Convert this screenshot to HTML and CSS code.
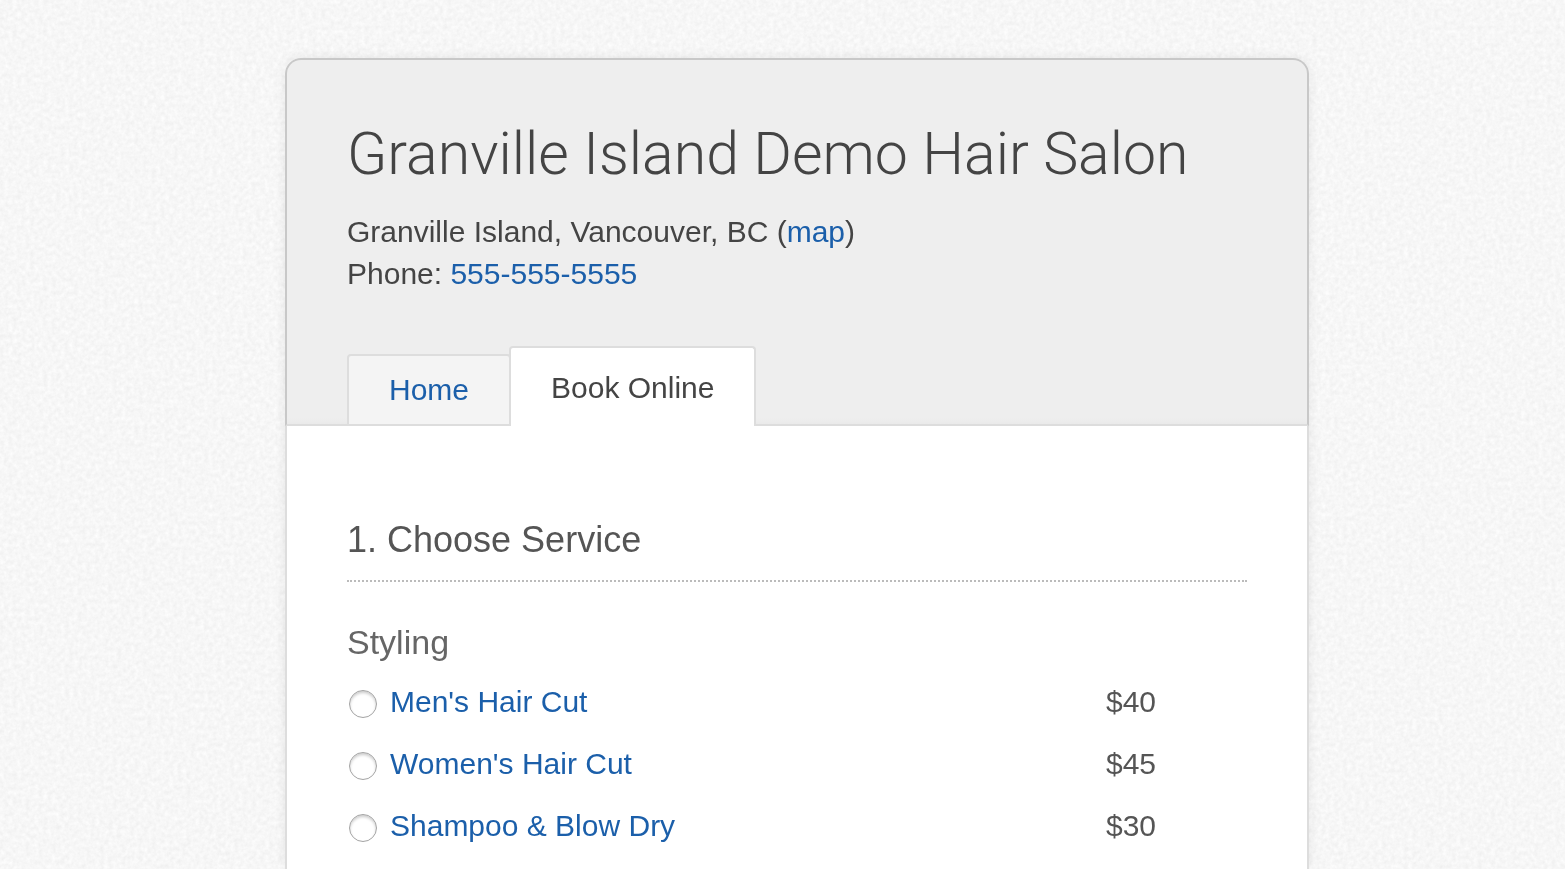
FILE: index.html
```html
<!DOCTYPE html>
<html lang="en">
<head>
<meta charset="utf-8">
<meta name="viewport" content="width=device-width, initial-scale=1">
<title>Granville Island Demo Hair Salon</title>
<link rel="stylesheet" href="styles.css">
</head>
<body class="page">
<svg class="texture" aria-hidden="true">
  <filter id="paper" x="0" y="0" width="100%" height="100%" color-interpolation-filters="sRGB">
    <feTurbulence type="fractalNoise" baseFrequency="0.23" numOctaves="3" seed="4" stitchTiles="stitch"/>
    <feColorMatrix values="0.07 0 0 0 0.932  0.07 0 0 0 0.932  0.07 0 0 0 0.932  0 0 0 0 1"/>
  </filter>
  <rect width="100%" height="100%" filter="url(#paper)"/>
</svg>
<main class="card">
  <header class="header">
    <h1 class="title">Granville Island Demo Hair Salon</h1>
    <address class="contact">
      Granville Island, Vancouver, BC (<a class="link" href="#map">map</a>)<br>
      Phone: <a class="link" href="tel:555-555-5555">555-555-5555</a>
    </address>
    <nav class="tabs">
      <a class="tab link" href="#home">Home</a>
      <a class="tab tab-active" href="#book" aria-current="page">Book Online</a>
    </nav>
  </header>
  <form class="booking">
    <h2 class="step">1. Choose Service</h2>
    <h3 class="category">Styling</h3>
    <ul class="services">
      <li class="service">
        <input class="radio" type="radio" name="service" id="mens">
        <label class="link name" for="mens">Men's Hair Cut</label>
        <span class="price">$40</span>
      </li>
      <li class="service">
        <input class="radio" type="radio" name="service" id="womens">
        <label class="link name" for="womens">Women's Hair Cut</label>
        <span class="price">$45</span>
      </li>
      <li class="service">
        <input class="radio" type="radio" name="service" id="shampoo">
        <label class="link name" for="shampoo">Shampoo &amp; Blow Dry</label>
        <span class="price">$30</span>
      </li>
    </ul>
  </form>
</main>
</body>
</html>
```
FILE: styles.css
```css
* {
  box-sizing: border-box;
}

.page {
  display: flex;
  flex-direction: column;
  min-height: 100vh;
  margin: 0;
  padding: 58px 0 0 29px;
  background: #f7f7f7;
  color: #444;
  font: 30px/42px "Liberation Sans", Arial, sans-serif;
}

.texture {
  position: fixed;
  inset: 0;
  z-index: -1;
  width: 100%;
  height: 100%;
}

.card {
  display: flex;
  flex: 1;
  flex-direction: column;
  width: 100%;
  max-width: 1024px;
  margin: 0 auto;
  border-radius: 16px 16px 0 0;
  background: #fff;
  box-shadow: 0 0 12px rgba(0, 0, 0, 0.08);
}

.header {
  padding: 59px 60px 0;
  border: 2px solid #c8c8c8;
  border-bottom-color: #ddd;
  border-radius: 16px 16px 0 0;
  background: linear-gradient(#eee, #eee calc(100% - 6px), #eaeaea);
}

.title {
  margin: 0 0 22px;
  font: 300 59px/70px Roboto, "Liberation Sans", sans-serif;
}

.contact {
  margin-bottom: 51px;
  font-style: normal;
}

.link {
  color: #1b5faa;
  text-decoration: none;
}

.tabs {
  display: flex;
  align-items: flex-end;
  margin-bottom: -2px;
}

.tab {
  padding: 13px 40px;
  border: 2px solid #ddd;
  border-radius: 4px 4px 0 0;
  background: #f4f4f4;
}

.tab-active {
  margin-left: -2px;
  padding: 19px 40px 17px;
  border-bottom: 0;
  background: #fff;
  color: #444;
  text-decoration: none;
}

.booking {
  flex: 1;
  padding: 90px 60px 0;
  border: solid #ddd;
  border-width: 0 2px;
}

.step {
  margin: 0 0 35px;
  padding-bottom: 16px;
  border-bottom: 2px dotted #bbb;
  color: #555;
  font-size: 36px;
  font-weight: 400;
  line-height: 48px;
}

.category {
  margin: 0;
  color: #666;
  font-size: 34px;
  font-weight: 400;
  line-height: 50px;
}

.services {
  margin: 0;
  padding: 4px 0 0;
  list-style: none;
}

.service {
  display: flex;
  align-items: center;
  height: 62px;
}

.radio {
  appearance: none;
  width: 28px;
  height: 28px;
  margin: 4px 13px 0 2px;
  border: 1px solid #a4a4a4;
  border-radius: 50%;
  background: #fff;
  box-shadow: inset 0 2px 3px rgba(0, 0, 0, 0.2);
}

.radio:checked {
  background: radial-gradient(#444 5px, #fff 6px);
}

.name {
  flex: 1;
}

.price {
  width: 141px;
  color: #555;
}
```
